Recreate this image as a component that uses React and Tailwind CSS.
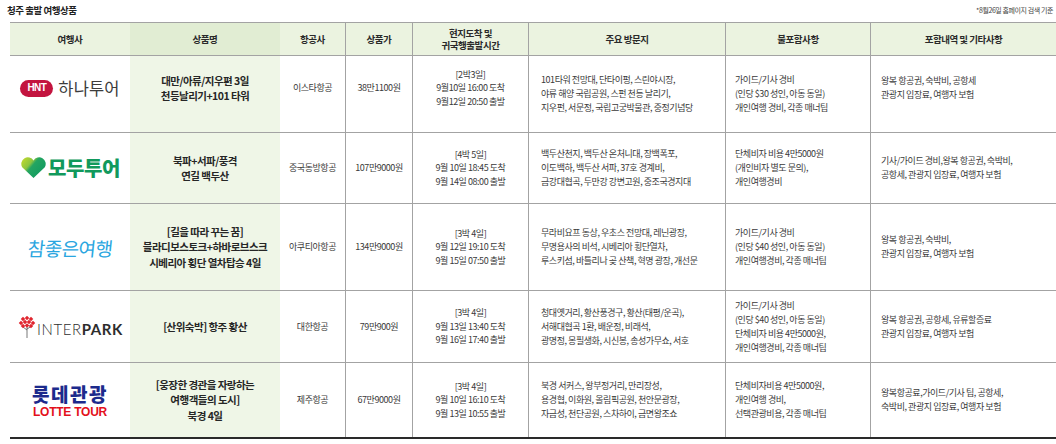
import React from "react";

const COLS = "grid grid-cols-[120px_150px_65px_67px_116px_197px_145px_186px]";
const KR = { fontFamily: '"Noto Sans CJK KR", "Noto Sans", sans-serif' };

function Lines({ lines, className = "" }) {
  return (
    <div className={className}>
      {lines.map((l, i) => (
        <div key={i} className="whitespace-nowrap">{l}</div>
      ))}
    </div>
  );
}

function HanaLogo() {
  return (
    <div className="flex items-center gap-[5px]">
      <div className="w-[33px] h-[17px] rounded-full bg-[#c3143f] flex items-center justify-center">
        <span className="text-white font-bold text-[10px] leading-none tracking-[-0.06em]" style={{ fontFamily: '"Liberation Sans", sans-serif' }}>HNT</span>
      </div>
      <span className="text-[16.5px] leading-none text-[#3c3c3c] tracking-[0.01em]">하나투어</span>
    </div>
  );
}

function ModuLogo() {
  return (
    <div className="flex items-center gap-[1px]">
      <svg width="27" height="22" viewBox="0 0 27 22">
        <defs>
          <linearGradient id="mh" x1="0" y1="0" x2="1" y2="0.7">
            <stop offset="0" stopColor="#c9dc2a" />
            <stop offset="0.38" stopColor="#8cc540" />
            <stop offset="0.5" stopColor="#24a562" />
            <stop offset="1" stopColor="#0f9a5f" />
          </linearGradient>
        </defs>
        <path d="M13.5 21 L2.2 10.2 A6 6 0 0 1 13.5 3.6 A6 6 0 0 1 24.8 10.2 Z" fill="url(#mh)" />
      </svg>
      <span className="text-[20px] leading-none font-black text-[#11995c] tracking-[-0.02em]">모두투어</span>
    </div>
  );
}

function ChamLogo() {
  return (
    <span className="text-[19px] leading-none text-[#2aa6e0] tracking-[-0.03em] -skew-x-6 inline-block">참좋은여행</span>
  );
}

function InterparkLogo() {
  const d = [
    [6, 3], [10, 2], [14, 3], [4, 7], [8, 6], [12, 6], [16, 7], [6, 10], [10, 9.5], [14, 10],
  ];
  return (
    <div className="flex items-end gap-[1px]">
      <svg width="19" height="22" viewBox="0 0 19 22">
        <path d="M10 11 L10 22 M10 14 L6 11 M10 13 L14 10.5" stroke="#555" strokeWidth="0.8" fill="none" />
        {d.map(([x, y], i) => (
          <rect key={i} x={x - 1.6} y={y - 1.6} width="3.2" height="3.2" fill="#e0262f" transform={`rotate(45 ${x} ${y})`} />
        ))}
      </svg>
      <span className="text-[15px] leading-none text-[#2d2d2d] tracking-[0.04em] pb-[1px]" style={{ fontFamily: 'Lato, "Liberation Sans", sans-serif' }}>
        <span className="font-light">INTER</span><span className="font-bold">PARK</span>
      </span>
    </div>
  );
}

function LotteLogo() {
  return (
    <div className="flex flex-col items-center pt-[1px]">
      <span className="text-[19px] leading-[20px] font-black text-[#1c2a8c] tracking-[0.08em]">롯데관광</span>
      <span className="text-[12px] leading-[11px] font-bold text-[#e3101b] tracking-[-0.02em] mt-[3px]" style={{ fontFamily: '"Liberation Sans", sans-serif' }}>LOTTE TOUR</span>
    </div>
  );
}

const rows = [
  {
    h: "h-[77px]",
    shift: true,
    logo: <HanaLogo />,
    name: ["대만/아류/지우편 3일", "천등날리기+101 타워"],
    air: "이스타항공",
    price: "38만1100원",
    time: ["[2박3일]", "9월10일 16:00 도착", "9월12일 20:50 출발"],
    visit: ["101타워 전망대, 단타이펑, 스린야시장,", "야류 해양 국립공원, 스펀 천등 날리기,", "지우펀, 서문정, 국립고궁박물관, 중정기념당"],
    excl: ["가이드/기사 경비", "(인당 $30 성인, 아동 동일)", "개인여행 경비, 각종 매너팁"],
    incl: ["왕복 항공권, 숙박비, 공항세", "관광지 입장료, 여행자 보험"],
  },
  {
    h: "h-[71px]",
    logo: <ModuLogo />,
    name: ["북파+서파/풍격", "연길 백두산"],
    air: "중국동방항공",
    price: "107만9000원",
    time: ["[4박 5일]", "9월 10일 18:45 도착", "9월 14일 08:00 출발"],
    visit: ["백두산천지, 백두산 온처니대, 장백폭포,", "이도백하, 백두산 서파, 37호 경계비,", "금강대협곡, 두만강 강변고원, 중조국경지대"],
    excl: ["단체비자 비용 4만5000원", "(개인비자 별도 문의),", "개인여행경비"],
    incl: ["기사/가이드 경비,왕복 항공권, 숙박비,", "공항세, 관광지 입장료, 여행자 보험"],
  },
  {
    h: "h-[87px]",
    logo: <ChamLogo />,
    name: ["[길을 따라 꾸는 꿈]", "블라디보스토크+하바로브스크", "시베리아 횡단 열차탑승 4일"],
    air: "아쿠티아항공",
    price: "134만9000원",
    time: ["[3박 4일]", "9월 12일 19:10 도착", "9월 15일 07:50 출발"],
    visit: ["무라비요프 동상, 우초스 전망대, 레닌광장,", "무명용사의 비석, 시베리아 횡단열차,", "루스키섬, 바틀리나 곶 산책, 혁명 광장, 개선문"],
    excl: ["가이드/기사 경비", "(인당 $40 성인, 아동 동일)", "개인여행경비, 각종 매너팁"],
    incl: ["왕복 항공권, 숙박비,", "관광지 입장료, 여행자 보험"],
  },
  {
    h: "h-[72px]",
    logo: <InterparkLogo />,
    name: ["[산위숙박] 항주 황산"],
    air: "대한항공",
    price: "79만900원",
    time: ["[3박 4일]", "9월 13일 13:40 도착", "9월 16일 17:40 출발"],
    visit: ["청대옛거리, 황산풍경구, 황산(태평/운곡),", "서해대협곡 1환, 배운정, 비래석,", "광명정, 몽필생화, 시신봉, 송성가무쇼, 서호"],
    excl: ["가이드/기사 경비", "(인당 $40 성인, 아동 동일)", "단체비자 비용 4만5000원,", "개인여행경비, 각종 매너팁"],
    incl: ["왕복 항공권, 공항세, 유류할증료", "관광지 입장료, 여행자 보험"],
  },
  {
    h: "h-[76px]",
    last: true,
    logo: <LotteLogo />,
    name: ["[웅장한 경관을 자랑하는", "여행객들의 도시]", "북경 4일"],
    air: "제주항공",
    price: "67만9000원",
    time: ["[3박 4일]", "9월 10일 16:10 도착", "9월 13일 10:55 출발"],
    visit: ["북경 서커스, 왕부정거리, 만리장성,", "용경협, 이화원, 올림픽공원, 천안문광장,", "자금성, 천단공원, 스차하이, 금면왕조쇼"],
    excl: ["단체비자비용 4만5000원,", "개인여행 경비,", "선택관광비용, 각종 매너팁"],
    incl: ["왕복항공료,가이드/기사 팁, 공항세,", "숙박비, 관광지 입장료, 여행자 보험"],
  },
];

function Row({ r }) {
  const up = r.shift ? "pb-[12px]" : "";
  const border = r.last ? "border-b-2 border-[#2a2a2a]" : "border-b border-[#a3a3a3]";
  const small = "text-[9px] tracking-[-0.05em] text-[#3a3a3a]";
  return (
    <div className={`${COLS} ${r.h} ${border}`}>
      <div className={`flex items-center justify-center ${up}`}>{r.logo}</div>
      <div className={`bg-[#eff6e7] flex items-center justify-center ${up}`}>
        <Lines lines={r.name} className="text-center text-[10.5px] leading-[15.5px] font-bold tracking-[-0.05em] text-[#262626]" />
      </div>
      <div className={`flex items-center justify-center ${up} ${small}`}>{r.air}</div>
      <div className={`flex items-center justify-center border-l border-[#a3a3a3] ${up} ${small}`}>{r.price}</div>
      <div className={`flex items-center justify-center border-l border-[#a3a3a3] ${up}`}>
        <Lines lines={r.time} className={`text-center leading-[13.5px] ${small}`} />
      </div>
      <div className="flex items-center border-l border-[#a3a3a3] pl-[12px]">
        <Lines lines={r.visit} className={`leading-[14px] ${small}`} />
      </div>
      <div className="flex items-center border-l border-[#a3a3a3] pl-[9px]">
        <Lines lines={r.excl} className={`leading-[14px] ${small}`} />
      </div>
      <div className={`flex items-center border-l border-[#a3a3a3] pl-[10px] ${up}`}>
        <Lines lines={r.incl} className={`leading-[14px] ${small}`} />
      </div>
    </div>
  );
}

export default function App() {
  const head = "flex items-center justify-center text-center text-[9.5px] font-bold tracking-[-0.05em] text-[#2a2a2a] leading-[12px]";
  return (
    <div className="w-[1056px] h-[444px] bg-white overflow-hidden" style={KR}>
      <div className="h-[22px] flex items-center justify-between pl-[7px] pr-[3px] pb-[2px]">
        <span className="text-[9.5px] font-bold tracking-[-0.05em] text-[#222]">청주 출발 여행상품</span>
        <span className="text-[7px] tracking-[-0.06em] text-[#444]">*8월26일 홈페이지 검색 기준</span>
      </div>
      <div className="ml-[10px]">
        <div className={`${COLS} h-[34px] border-t border-b border-[#a3a3a3] bg-[#ebf3e0]`}>
          <div className={head}>여행사</div>
          <div className={`${head} bg-[#e1edd3]`}>상품명</div>
          <div className={head}>항공사</div>
          <div className={`${head} border-l border-[#a3a3a3]`}>상품가</div>
          <div className={`${head} border-l border-[#a3a3a3]`}>
            <div>현지도착 및<br />귀국행출발시간</div>
          </div>
          <div className={`${head} border-l border-[#a3a3a3]`}>주요 방문지</div>
          <div className={`${head} border-l border-[#a3a3a3]`}>불포함사항</div>
          <div className={`${head} border-l border-[#a3a3a3]`}>포함내역 및 기타사항</div>
        </div>
        {rows.map((r, i) => (
          <Row key={i} r={r} />
        ))}
      </div>
    </div>
  );
}
